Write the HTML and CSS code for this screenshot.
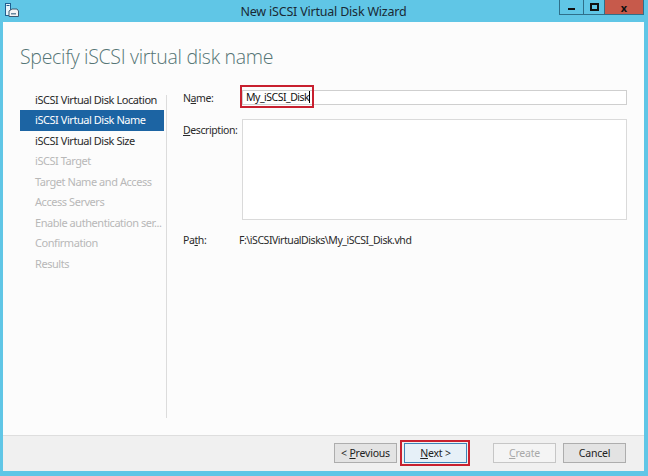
FILE: index.html
```html
<!DOCTYPE html>
<html lang="en">
<head>
  <meta charset="UTF-8">
  <title>New iSCSI Virtual Disk Wizard</title>
  <link rel="stylesheet" href="styles.css">
</head>
<body>
  <div class="window">
    <!-- Title bar -->
    <div class="titlebar">
      <svg class="app-icon" width="14" height="14" viewBox="0 0 14 14">
        <rect x="0.5" y="0.5" width="5" height="12" fill="#e8f4fa" stroke="#1f5f8f"/>
        <rect x="1.5" y="2" width="3" height="1" fill="#1f5f8f"/>
        <path d="M4 8 L7 6 H12 L13.5 8 V13.5 H4 Z" fill="#f4f4f4" stroke="#3c5a70"/>
        <rect x="6" y="10" width="5" height="1.5" fill="#6a8aa0"/>
      </svg>
      <span class="title">New iSCSI Virtual Disk Wizard</span>
      <div class="controls">
        <span class="ctl min"><i></i></span>
        <span class="ctl max"><i></i></span>
        <span class="ctl close">x</span>
      </div>
    </div>

    <div class="page">
      <div class="main">
        <h1 class="heading">Specify iSCSI virtual disk name</h1>

        <div class="content">
          <!-- Steps list -->
          <ul class="steps">
            <li>iSCSI Virtual Disk Location</li>
            <li class="current">iSCSI Virtual Disk Name</li>
            <li>iSCSI Virtual Disk Size</li>
            <li class="off">iSCSI Target</li>
            <li class="off">Target Name and Access</li>
            <li class="off">Access Servers</li>
            <li class="off">Enable authentication ser...</li>
            <li class="off">Confirmation</li>
            <li class="off">Results</li>
          </ul>
          <div class="divider"></div>

          <!-- Form -->
          <div class="form">
            <div class="row row-name">
              <label class="label">N<u>a</u>me:</label>
              <div class="field">
                <div class="textbox">My_iSCSI_Disk<span class="caret"></span></div>
                <div class="mark mark-name"></div>
              </div>
            </div>
            <div class="row row-desc">
              <label class="label"><u>D</u>escription:</label>
              <div class="textarea"></div>
            </div>
            <div class="row row-path">
              <label class="label">Pa<u>t</u>h:</label>
              <span class="value">F:\iSCSIVirtualDisks\My_iSCSI_Disk.vhd</span>
            </div>
          </div>
        </div>
      </div>

      <!-- Buttons -->
      <div class="footer">
        <button class="btn">&lt; <u>P</u>revious</button>
        <span class="btn-wrap">
          <button class="btn default"><u>N</u>ext &gt;</button>
          <span class="mark mark-next"></span>
        </span>
        <button class="btn disabled" disabled><u>C</u>reate</button>
        <button class="btn">Cancel</button>
      </div>
    </div>
  </div>
</body>
</html>
```

FILE: styles.css
```css
/* Global */
body {
  margin: 0;
  font-family: 'Noto Sans', 'Open Sans', sans-serif;
  font-size: 11px;
  color: #222;
}

/* Window frame */
.window {
  width: 648px;
  height: 476px;
  background: #60c6e6;
  padding: 0 4px 5px 3px;
  box-sizing: border-box;
  display: flex;
  flex-direction: column;
}

/* Title bar */
.titlebar {
  height: 22px;
  display: flex;
  align-items: center;
  position: relative;
  flex-shrink: 0;
}

.app-icon {
  margin: -3px 0 0 2px;
}

.title {
  position: absolute;
  left: 0;
  right: 0;
  top: 3px;
  text-align: center;
  font-size: 12.5px;
  letter-spacing: -0.2px;
  color: #1a2a35;
}

.controls {
  position: absolute;
  right: 0;
  top: 0;
  display: flex;
}

.ctl {
  height: 15px;
  box-sizing: border-box;
  border: 1px solid #2f6f8a;
  border-top: none;
  display: flex;
  align-items: center;
  justify-content: center;
}

.ctl + .ctl {
  border-left: none;
}

.min {
  width: 25px;
}

.min i {
  width: 7px;
  height: 2px;
  margin-top: 4px;
  background: #111;
}

.max {
  width: 21px;
}

.max i {
  width: 5px;
  height: 4px;
  border: 2px solid #111;
}

.close {
  width: 39px;
  background: #c75a4b;
  color: #111;
  font-weight: bold;
  font-size: 11px;
  line-height: 13px;
}

/* Page */
.page {
  flex: 1;
  display: flex;
  flex-direction: column;
  background: #fcfcfc;
}

.main {
  flex: 1;
  display: flex;
  flex-direction: column;
}

.heading {
  margin: 0;
  height: 58px;
  box-sizing: border-box;
  padding: 21px 0 0 17px;
  font-size: 19.5px;
  font-weight: 300;
  font-family: 'Open Sans', 'Noto Sans', sans-serif;
  color: #557575;
  letter-spacing: -0.3px;
}

.content {
  flex: 1;
  display: flex;
}

/* Steps */
.steps {
  list-style: none;
  margin: 0;
  padding: 9.5px 2px 0 17px;
  width: 144px;
}

.steps li {
  height: 20.5px;
  line-height: 20.5px;
  padding-left: 15px;
  font-size: 11px;
  letter-spacing: -0.45px;
  color: #2a2a2a;
  white-space: nowrap;
}

.steps li.current {
  background: #1c64a3;
  color: #fff;
}

.steps li.off {
  color: #b8b8b8;
}

.divider {
  width: 1px;
  background: #dcdcdc;
  margin: 15px 0 17px;
}

/* Form */
.form {
  flex: 1;
  padding: 10px 17px 0 16px;
}

.row {
  display: flex;
}

.label {
  width: 59px;
  flex-shrink: 0;
  font-size: 10.5px;
  letter-spacing: -0.4px;
  color: #2a2a2a;
  white-space: nowrap;
}

.row-name {
  align-items: center;
  height: 15px;
}

.field {
  flex: 1;
  position: relative;
}

.textbox {
  height: 15px;
  box-sizing: border-box;
  border: 1px solid #cfcfcf;
  background: #fff;
  padding-left: 3px;
  line-height: 13px;
  font-size: 10.5px;
  color: #111;
  letter-spacing: -0.5px;
}

.caret {
  display: inline-block;
  width: 1px;
  height: 12px;
  background: #000;
  vertical-align: -2px;
}

.mark {
  position: absolute;
  border: 2px solid #c8202f;
}

.mark-name {
  left: -2px;
  top: -5px;
  width: 70px;
  height: 19px;
}

.row-desc {
  margin-top: 14px;
}

.row-desc .label {
  padding-top: 4px;
}

.textarea {
  flex: 1;
  height: 101px;
  box-sizing: border-box;
  border: 1px solid #dadada;
  background: #fff;
}

.row-path {
  margin-top: 12px;
  line-height: 17px;
}

.value {
  margin-left: -3px;
  font-size: 10.5px;
  letter-spacing: -0.45px;
  color: #2a2a2a;
}

/* Footer buttons */
.footer {
  height: 36px;
  box-sizing: border-box;
  border-top: 1px solid #dedede;
  background: #f0f0f0;
  display: flex;
  align-items: center;
  justify-content: flex-end;
  padding: 0 18px 1px 0;
  gap: 7px;
}

.btn {
  width: 63px;
  height: 20px;
  padding: 0;
  box-sizing: border-box;
  border: 1px solid #adadad;
  background: #e3e3e3;
  font-family: 'Noto Sans', 'Open Sans', sans-serif;
  font-size: 10.5px;
  letter-spacing: -0.2px;
  color: #222;
}

.btn-wrap {
  position: relative;
  display: flex;
}

.btn.default {
  border-color: #3d84b8;
  background: #e6f0f8;
}

.btn.disabled {
  margin-left: 19px;
  background: #f4f4f4;
  border-color: #c6c6c6;
  color: #a8a8a8;
}

.mark-next {
  left: -4px;
  top: -3px;
  width: 66px;
  height: 22px;
}
```
